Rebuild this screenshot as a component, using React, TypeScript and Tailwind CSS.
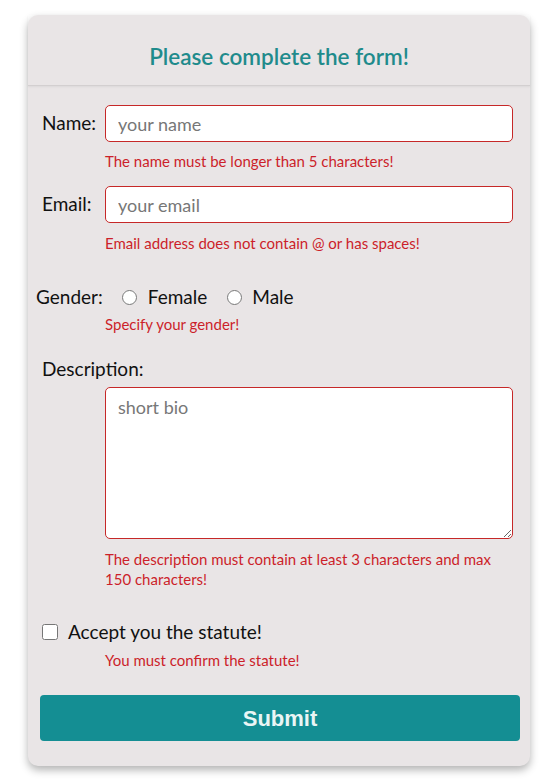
import React from 'react';

const font = { fontFamily: 'Lato, "Liberation Sans", sans-serif' };

const ErrorText: React.FC<{ children: React.ReactNode; className?: string }> = ({ children, className }) => (
  <p className={`ml-[65px] max-w-[408px] text-[15px] leading-[20px] text-[#cc1f2a] ${className ?? ''}`}>{children}</p>
);

const inputCls =
  'h-[37px] w-[408px] rounded-[5px] border border-[#c62828] bg-white px-[12px] text-[18px] outline-none placeholder:text-[#777]';

const App: React.FC = () => {
  return (
    <div className="min-h-screen bg-white pt-[15px]" style={font}>
      <form className="ml-[28px] w-[502px] rounded-[10px] bg-[#e9e5e6] shadow-[0_4px_8px_rgba(0,0,0,0.3)]">
        {/* Header */}
        <div className="border-b border-[#d3cfd0] pb-[13px] pt-[27px] text-center shadow-[0_1px_2px_rgba(0,0,0,0.06)]">
          <h1 className="text-[22.5px] font-semibold leading-[30px] text-[#1f8b8c]">Please complete the form!</h1>
        </div>

        <div className="pb-[25px] pl-[12px] pr-[10px] pt-[19px]">
          {/* Name */}
          <div className="flex items-center">
            <label className="w-[65px] pl-[2px] text-[19px] text-[#111]">Name:</label>
            <input type="text" placeholder="your name" className={inputCls} />
          </div>
          <ErrorText className="mt-[9px]">The name must be longer than 5 characters!</ErrorText>

          {/* Email */}
          <div className="mt-[15px] flex items-center">
            <label className="w-[65px] pl-[2px] text-[19px] text-[#111]">Email:</label>
            <input type="text" placeholder="your email" className={inputCls} />
          </div>
          <ErrorText className="mt-[10px]">Email address does not contain @ or has spaces!</ErrorText>

          {/* Gender */}
          <div className="mt-[32px] flex h-[24px] items-center text-[19px] text-[#111]">
            <span className="-ml-[4px] mr-[19px]">Gender:</span>
            <label className="flex items-center">
              <input type="radio" name="gender" className="m-0 h-[15px] w-[15px]" />
              <span className="ml-[11px]">Female</span>
            </label>
            <label className="ml-[20px] flex items-center">
              <input type="radio" name="gender" className="m-0 h-[15px] w-[15px]" />
              <span className="ml-[10px]">Male</span>
            </label>
          </div>
          <ErrorText className="mt-[5px]">Specify your gender!</ErrorText>

          {/* Description */}
          <label className="mt-[23px] block pl-[2px] text-[19px] leading-[24px] text-[#111]">Description:</label>
          <div className="ml-[65px] mt-[6px]">
            <textarea
              placeholder="short bio"
              className="block h-[152px] w-[408px] rounded-[5px] border border-[#c62828] bg-white px-[12px] py-[6px] text-[18px] outline-none placeholder:text-[#777]"
            />
          </div>
          <ErrorText className="mt-[10px]">
            The description must contain at least 3 characters and max
            <br />
            150 characters!
          </ErrorText>

          {/* Statute */}
          <label className="mt-[31px] flex h-[24px] items-center pl-[2px] text-[19px] text-[#111]">
            <input type="checkbox" className="m-0 h-[16px] w-[16px]" />
            <span className="ml-[10px]">Accept you the statute!</span>
          </label>
          <ErrorText className="mt-[6px]">You must confirm the statute!</ErrorText>

          <button
            type="button"
            className="mt-[25px] h-[46px] w-[480px] rounded-[4px] bg-[#148e93] text-[22px] font-bold text-[#eaf5f5]"
            style={{ fontFamily: '"Liberation Sans", Arial, sans-serif' }}
          >
            Submit
          </button>
        </div>
      </form>
    </div>
  );
};

export default App;
